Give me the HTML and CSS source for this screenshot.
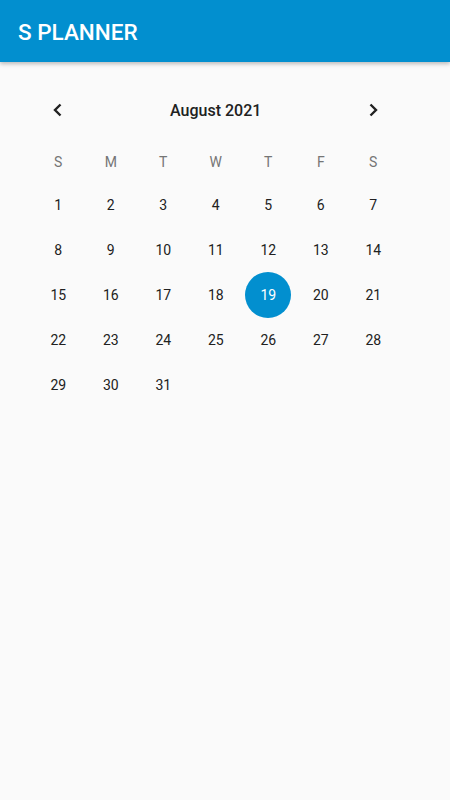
FILE: index.html
```html
<!DOCTYPE html>
<html>
<head>
<meta charset="utf-8">
<link rel="stylesheet" href="styles.css">
</head>
<body>
<header class="appbar"><h1 class="title">S PLANNER</h1></header>
<main class="calendar">
  <div class="nav">
    <button class="arrow"><svg width="16" height="16" viewBox="0 0 16 16"><path d="M10.5 2.5 L5 8 L10.5 13.5" fill="none" stroke="#212121" stroke-width="2.4"/></svg></button>
    <div class="month">August 2021</div>
    <button class="arrow"><svg width="16" height="16" viewBox="0 0 16 16"><path d="M5.5 2.5 L11 8 L5.5 13.5" fill="none" stroke="#212121" stroke-width="2.4"/></svg></button>
  </div>
  <div class="weekdays">
    <span>S</span><span>M</span><span>T</span><span>W</span><span>T</span><span>F</span><span>S</span>
  </div>
  <div class="days">
    <span>1</span><span>2</span><span>3</span><span>4</span><span>5</span><span>6</span><span>7</span>
    <span>8</span><span>9</span><span>10</span><span>11</span><span>12</span><span>13</span><span>14</span>
    <span>15</span><span>16</span><span>17</span><span>18</span><span class="selected"><b>19</b></span><span>20</span><span>21</span>
    <span>22</span><span>23</span><span>24</span><span>25</span><span>26</span><span>27</span><span>28</span>
    <span>29</span><span>30</span><span>31</span>
  </div>
</main>
</body>
</html>
```
FILE: styles.css
```css
html, body { margin: 0; padding: 0; }
body {
  background: #fafafa;
  font-family: Roboto, "Noto Sans", sans-serif;
  width: 450px;
  height: 800px;
  overflow: hidden;
}
.appbar {
  height: 62px;
  background: #028fcf;
  box-shadow: 0 2px 4px rgba(0,0,0,0.25);
  display: flex;
  align-items: center;
  padding-left: 18px;
  padding-top: 2px;
  box-sizing: border-box;
  position: relative;
}
.title {
  margin: 0;
  color: #fff;
  font-size: 22.5px;
  font-weight: 500;
  letter-spacing: 0;
}
.calendar {
  margin-left: 32px;
  width: 367.5px;
  padding-top: 28px;
}
.nav {
  display: flex;
  align-items: center;
  justify-content: space-between;
  height: 40px;
}
.arrow {
  width: 52.5px;
  height: 40px;
  border: 0;
  background: none;
  padding: 0;
  display: flex;
  align-items: center;
  justify-content: center;
}
.month {
  font-size: 16px;
  font-weight: 500;
  color: #212121;
}
.weekdays, .days {
  display: grid;
  grid-template-columns: repeat(7, 52.5px);
}
.weekdays {
  margin-top: 12px;
}
.weekdays span {
  height: 40px;
  display: flex;
  align-items: center;
  justify-content: center;
  font-size: 14px;
  color: #757575;
}
.days {
  margin-top: 0;
}
.days span {
  height: 45px;
  display: flex;
  align-items: center;
  justify-content: center;
  font-size: 14px;
  color: #212121;
}
.days .selected b {
  width: 46px;
  height: 46px;
  border-radius: 50%;
  background: #028fcf;
  color: #fff;
  font-weight: 400;
  display: flex;
  align-items: center;
  justify-content: center;
}
```
